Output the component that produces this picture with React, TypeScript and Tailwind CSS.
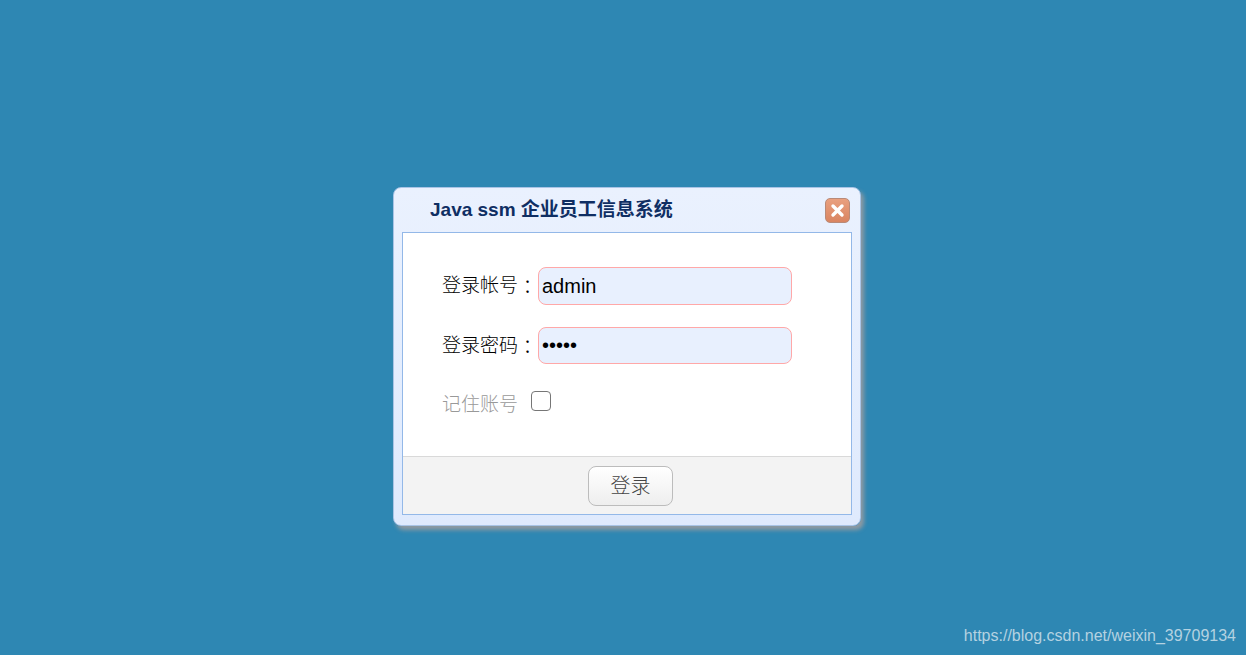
import React from "react";

const cjk = "font-['Liberation_Sans','Noto_Sans_CJK_SC',sans-serif]";

const Field = ({ label, type, value, height }: { label: string; type: string; value: string; height: string }) => (
  <div className="flex items-center">
    <label className="w-[96px] shrink-0 pb-[2px] text-[19px] font-light leading-[24px] text-black">
      {label}
      <span className="inline-block translate-y-[2px] font-['Noto_Sans_CJK_JP',sans-serif]">：</span>
    </label>
    <input
      type={type}
      defaultValue={value}
      className={`${height} w-[254px] rounded-[8px] border border-[#ffa8a8] bg-[#e8f0fe] px-[3px] text-[20px] text-black outline-none`}
    />
  </div>
);

export default function App() {
  return (
    <div className={`${cjk} relative flex h-[655px] w-[1246px] items-start overflow-hidden bg-[#2e87b3] pl-[393px] pt-[187px]`}>
      {/* login window */}
      <div className="flex h-[339px] w-[468px] flex-col rounded-[8px] border border-[#a9c4e6] bg-gradient-to-b from-[#eaf1fe] to-[#dfeafd] px-[8px] pb-[10px] shadow-[3px_4px_4px_rgba(150,155,160,0.95)]">
        <div className="flex h-[44px] shrink-0 items-center justify-between pl-[28px] pr-[2px]">
          <h1 className="text-[19px] font-bold leading-[24px] text-[#0f2e63]">Java ssm 企业员工信息系统</h1>
          <button className="flex h-[25px] w-[25px] items-center justify-center rounded-[5px] border border-[#b98a78] bg-gradient-to-b from-[#e9a07f] to-[#d98461]">
            <svg width="15" height="15" viewBox="0 0 15 15">
              <path d="M3 3l9 9M12 3l-9 9" stroke="#fff" strokeWidth="3.4" strokeLinecap="round" fill="none" />
            </svg>
          </button>
        </div>

        <div className="flex flex-1 flex-col border border-[#93b8e8] bg-white">
          <div className="flex flex-1 flex-col pl-[39px] pt-[34px]">
            <Field label="登录帐号" type="text" value="admin" height="h-[38px]" />
            <div className="mt-[22px]">
              <Field label="登录密码" type="password" value="admin" height="h-[37px]" />
            </div>
            <div className="mt-[27px] flex items-start">
              <span className="w-[89px] pt-[2px] text-[19px] font-light leading-[24px] text-[#999999]">记住账号</span>
              <span className="block h-[20px] w-[20px] rounded-[4px] border border-[#767676] bg-white" />
            </div>
          </div>
          <div className="flex h-[58px] shrink-0 items-start justify-center border-t border-[#d9d9d9] bg-[#f3f3f3] pl-[7px] pt-[9px]">
            <button className="h-[40px] w-[85px] rounded-[8px] border border-[#bcbcbc] bg-gradient-to-b from-white to-[#eeeeee] text-[20px] font-light text-[#444444]">
              登录
            </button>
          </div>
        </div>
      </div>

      {/* csdn watermark */}
      <span className="absolute bottom-[9px] right-[10px] text-[16px] leading-[20px] text-[#b4d2e1]">
        https://blog.csdn.net/weixin_39709134
      </span>
    </div>
  );
}
